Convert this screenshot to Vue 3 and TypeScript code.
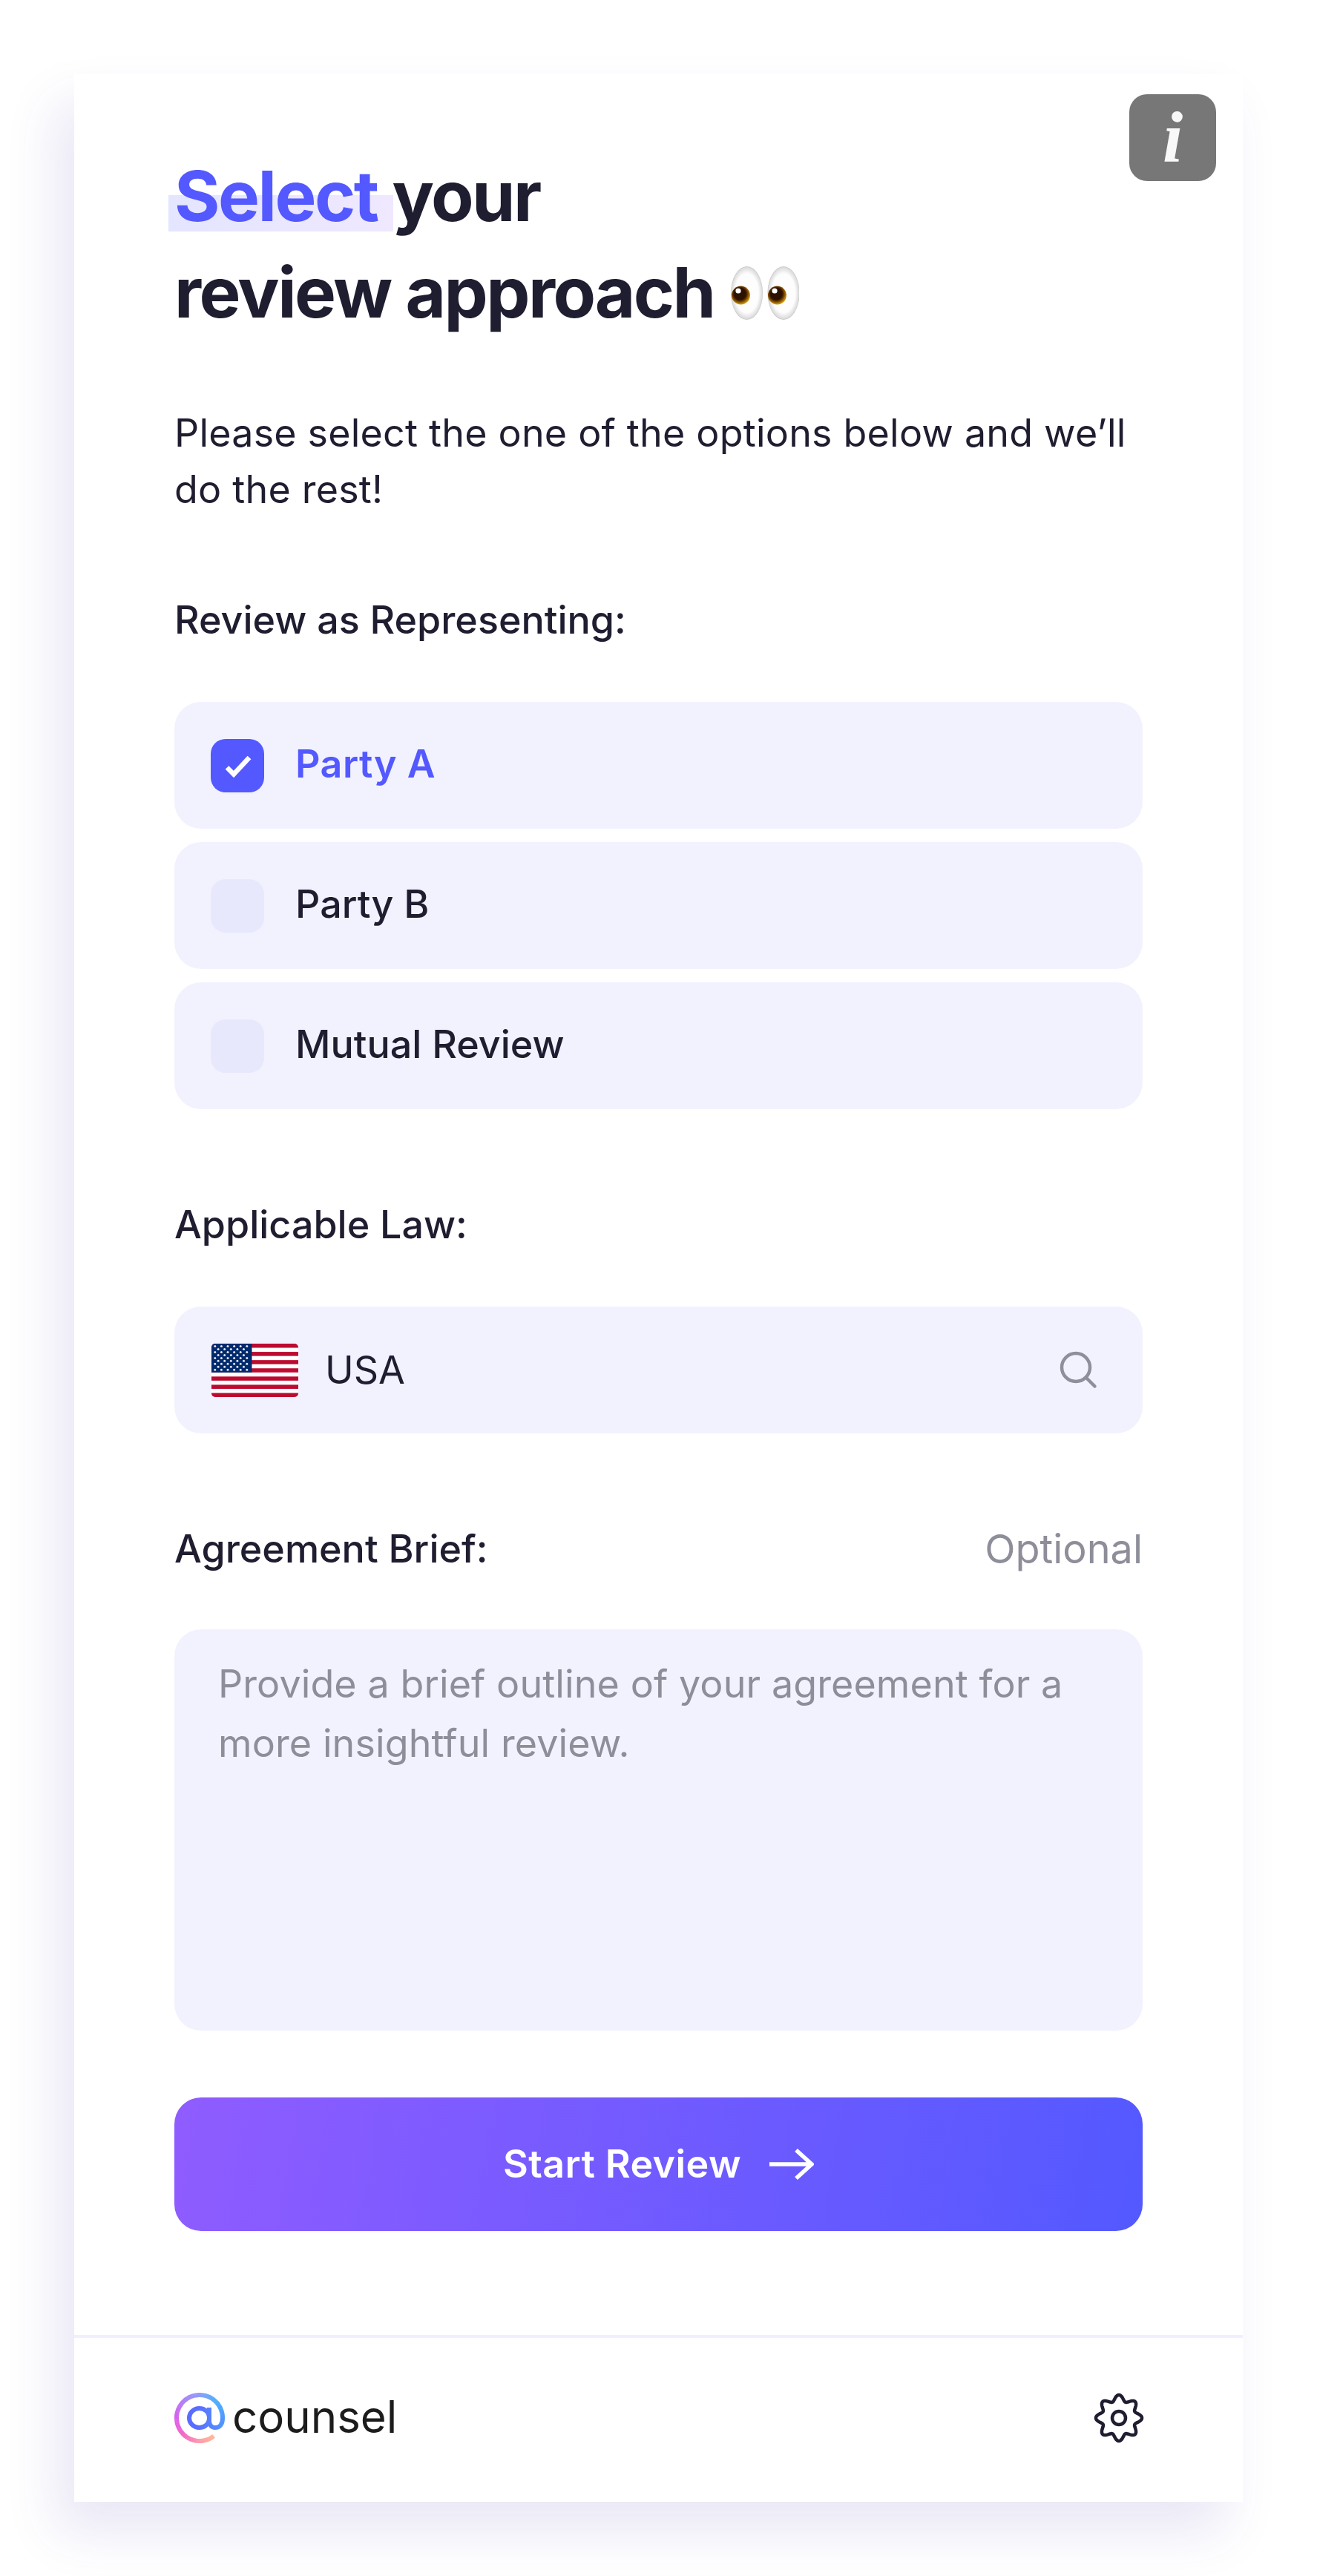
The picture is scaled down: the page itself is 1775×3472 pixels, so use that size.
<script setup lang="ts">
import { computed, ref } from 'vue'

const options = ['Party A', 'Party B', 'Mutual Review']
const selected = ref('Party A')

// Gear outline: eight smooth lobes round a common centre.
const gearPath = computed(() => {
  const points: string[] = []
  for (let i = 0; i < 320; i++) {
    const t = (i / 320) * Math.PI * 2
    const r = 27 + 4 * Math.cos(8 * t)
    points.push(`${(36 + r * Math.sin(t)).toFixed(2)} ${(36 - r * Math.cos(t)).toFixed(2)}`)
  }
  return `M${points.join('L')}Z`
})

// Flag stars: nine rows alternating six and five.
const stars = computed(() => {
  const list: { x: number; y: number }[] = []
  for (let row = 0; row < 9; row++) {
    const count = row % 2 === 0 ? 6 : 5
    for (let c = 0; c < count; c++) {
      list.push({
        x: (row % 2 === 0 ? 4.8 : 9.1) + c * 8.6,
        y: 3.6 + row * 3.95,
      })
    }
  }
  return list
})
const stripes = [0, 2, 4, 6, 8, 10, 12]

// Logo ring: colour shifts along the arc, clockwise from the tail end.
const mix = (a: number[], b: number[], k: number) =>
  `rgb(${a.map((v, i) => Math.round(v + (b[i] - v) * k)).join(',')})`
const stops: [number, number[]][] = [
  [0, [255, 184, 150]],
  [0.12, [255, 154, 170]],
  [0.27, [240, 104, 200]],
  [0.42, [216, 96, 240]],
  [0.56, [176, 128, 245]],
  [0.71, [138, 160, 248]],
  [0.85, [76, 176, 251]],
  [1, [82, 150, 255]],
]
const ring = computed(() => {
  const out: { d: string; c: string }[] = []
  const startDeg = 52
  const sweep = 308
  const n = 80
  const pt = (deg: number) => {
    const a = (deg * Math.PI) / 180
    return `${(34 + 31 * Math.cos(a)).toFixed(2)} ${(36 + 31 * Math.sin(a)).toFixed(2)}`
  }
  for (let i = 0; i < n; i++) {
    const k = i / n
    const a0 = startDeg + k * sweep
    const a1 = a0 + (sweep / n) * 1.2
    let c = ''
    for (let s = 0; s < stops.length - 1; s++) {
      if (k >= stops[s][0] && k <= stops[s + 1][0]) {
        c = mix(stops[s][1], stops[s + 1][1], (k - stops[s][0]) / (stops[s + 1][0] - stops[s][0]))
      }
    }
    out.push({ d: `M${pt(a0)}A31 31 0 0 1 ${pt(a1)}`, c })
  }
  return out
})
</script>

<template>
  <main class="page">
    <section class="card">
      <button class="info" type="button" aria-label="Information">i</button>

      <div class="content">
        <h1 class="title">
          <span class="mark">Select</span> your<br />review approach<svg class="eyes" viewBox="0 0 92 72" aria-hidden="true">
            <defs>
              <radialGradient id="white" cx="50%" cy="50%" r="52%">
                <stop offset="70%" stop-color="#fdfdfd" />
                <stop offset="92%" stop-color="#dcdcdc" />
                <stop offset="100%" stop-color="#a8a8a8" />
              </radialGradient>
              <radialGradient id="iris" cx="45%" cy="42%" r="55%">
                <stop offset="58%" stop-color="#2e1200" />
                <stop offset="78%" stop-color="#7a4500" />
                <stop offset="100%" stop-color="#c99400" />
              </radialGradient>
            </defs>
            <ellipse cx="21.5" cy="36" rx="21.5" ry="36" fill="url(#white)" />
            <ellipse cx="71" cy="36" rx="21.5" ry="36" fill="url(#white)" />
            <circle cx="13.5" cy="39" r="12.5" fill="url(#iris)" />
            <circle cx="62.5" cy="39" r="12.5" fill="url(#iris)" />
            <circle cx="10" cy="33" r="3.6" fill="#fff" />
            <circle cx="59" cy="33" r="3.6" fill="#fff" />
          </svg>
        </h1>

        <p class="intro">Please select the one of the options below and we’ll do the rest!</p>

        <h2 class="label first">Review as Representing:</h2>
        <div class="options">
          <div
            v-for="option in options"
            :key="option"
            class="option"
            :class="{ active: option === selected }"
            @click="selected = option"
          >
            <span class="box">
              <svg v-if="option === selected" viewBox="0 0 72 72" aria-hidden="true">
                <path d="M22 38.5 L31 47.5 L52 25" fill="none" stroke="#fff" stroke-width="6.5" />
              </svg>
            </span>
            <span class="option-text">{{ option }}</span>
          </div>
        </div>

        <h2 class="label law">Applicable Law:</h2>
        <div class="select">
          <svg class="flag" viewBox="0 0 117 72" aria-hidden="true">
            <rect width="117" height="72" fill="#fff" />
            <rect v-for="s in stripes" :key="s" x="0" :y="s * 5.54" width="117" height="5.54" fill="#bd0a30" />
            <rect width="54.5" height="38.8" fill="#012a6d" />
            <circle v-for="(star, i) in stars" :key="i" :cx="star.x" :cy="star.y" r="1.5" fill="#e6e8f2" />
          </svg>
          <span class="country">USA</span>
          <svg class="search" viewBox="0 0 56 56" aria-hidden="true">
            <circle cx="24" cy="24" r="19" fill="none" stroke="#8f8f9c" stroke-width="4.5" />
            <path d="M38 38 L49.5 49.5" fill="none" stroke="#8f8f9c" stroke-width="4.5" stroke-linecap="round" />
          </svg>
        </div>

        <div class="brief-head">
          <h2 class="label">Agreement Brief:</h2>
          <span class="optional">Optional</span>
        </div>
        <div class="brief">Provide a brief outline of your agreement for a more insightful review.</div>

        <button class="start" type="button">
          <span>Start Review</span>
          <svg viewBox="0 0 60 42" aria-hidden="true">
            <path d="M0 21 H57 M36 2 L57 21 L36 40" fill="none" stroke="#fff" stroke-width="5.5" />
          </svg>
        </button>
      </div>

      <footer class="footer">
        <div class="brand">
          <svg class="at" viewBox="0 0 68 72" aria-hidden="true">
            <defs>
              <linearGradient id="bowl" x1="0" y1="0" x2="1" y2="0">
                <stop offset="0.25" stop-color="#5a6cff" />
                <stop offset="1" stop-color="#5295ff" />
              </linearGradient>
            </defs>
            <path v-for="(seg, i) in ring" :key="i" :d="seg.d" fill="none" :stroke="seg.c" stroke-width="6" />
            <path
              d="M65 36 C65 45 61 49 55 49 C50 49 47 45 47 41 V22 M47 36 C47 44 41 49 33.5 49 C26 49 20 43 20 36 C20 29 26 23 33.5 23 C41 23 47 28 47 36"
              fill="none"
              stroke="url(#bowl)"
              stroke-width="6"
            />
          </svg>
          <span class="wordmark">counsel</span>
        </div>
        <svg class="gear" viewBox="0 0 72 72" aria-hidden="true">
          <path :d="gearPath" fill="none" stroke="#1f1d30" stroke-width="4.5" />
          <circle cx="36" cy="36" r="9" fill="none" stroke="#1f1d30" stroke-width="4.5" />
        </svg>
      </footer>
    </section>
  </main>
</template>

<style scoped>
.page {
  box-sizing: border-box;
  width: 1775px;
  height: 3472px;
  padding: 100px;
  overflow: hidden;
  background: #fff;
  font-family: Inter, "Liberation Sans", sans-serif;
  color: #1f1d30;
}
.card {
  position: relative;
  display: flex;
  flex-direction: column;
  width: 1575px;
  height: 3272px;
  background: #fff;
  box-shadow: -24px 40px 66px rgba(70, 60, 170, 0.12);
}
.info {
  position: absolute;
  top: 27px;
  right: 36px;
  width: 117px;
  height: 117px;
  padding: 0;
  border: 0;
  border-radius: 24px;
  background: #777;
  color: #f8f8f8;
  font: italic 700 98px/117px "Liberation Serif", serif;
}
.content {
  flex: 1;
  display: flex;
  flex-direction: column;
  padding: 99px 135px 0;
}
.title {
  margin: 0;
  font-size: 94px;
  line-height: 130px;
  font-weight: 700;
  letter-spacing: -2.5px;
}
.mark {
  position: relative;
  z-index: 0;
  color: #5359ff;
}
.mark::before {
  content: "";
  position: absolute;
  z-index: -1;
  left: -8px;
  right: -21px;
  bottom: 9px;
  height: 49px;
  background: linear-gradient(90deg, #e4e5ff, #efe8ff);
}
.eyes {
  display: inline-block;
  width: 92px;
  height: 72px;
  margin-left: 22px;
  vertical-align: -3px;
}
.intro {
  margin: 87px 0 0;
  font-size: 52px;
  line-height: 76px;
  font-weight: 400;
  letter-spacing: 0.2px;
}
.label {
  margin: 0;
  font-size: 52px;
  line-height: 60px;
  font-weight: 500;
}
.label.first {
  margin-top: 108px;
  margin-bottom: 80px;
}
.label.law {
  margin-top: 126px;
  margin-bottom: 80px;
}
.options {
  display: flex;
  flex-direction: column;
  gap: 18px;
}
.option {
  display: flex;
  align-items: center;
  gap: 43px;
  height: 171px;
  padding: 0 49px;
  border-radius: 36px;
  background: #f2f2ff;
  font-size: 52px;
  font-weight: 500;
  cursor: pointer;
}
.option-text {
  margin-left: -1px;
  padding-bottom: 5px;
}
.option.active {
  color: #5359ff;
  font-weight: 600;
  letter-spacing: 0.5px;
}
.box {
  flex: none;
  width: 72px;
  height: 72px;
  border-radius: 20px;
  background: #e8e8fd;
}
.box svg {
  display: block;
  width: 72px;
  height: 72px;
}
.active .box {
  background: #5359ff;
}
.select {
  display: flex;
  align-items: center;
  height: 171px;
  padding: 0 58px 0 50px;
  border-radius: 36px;
  background: #f2f2ff;
}
.flag {
  flex: none;
  width: 117px;
  height: 72px;
  border-radius: 5px;
}
.country {
  margin-left: 36px;
  font-size: 52px;
  font-weight: 400;
}
.search {
  flex: none;
  width: 56px;
  height: 56px;
  margin-left: auto;
}
.brief-head {
  display: flex;
  align-items: center;
  justify-content: space-between;
  margin-top: 126px;
}
.optional {
  font-size: 54px;
  line-height: 60px;
  color: #8e8e9a;
}
.brief {
  box-sizing: border-box;
  height: 541px;
  margin-top: 78px;
  padding: 34px 59px;
  border-radius: 36px;
  background: #f2f2ff;
  font-size: 52px;
  line-height: 80px;
  letter-spacing: 0.1px;
  color: #8e8e9a;
}
.start {
  display: flex;
  align-items: center;
  justify-content: center;
  gap: 38px;
  height: 180px;
  margin-top: 90px;
  padding: 0;
  border: 0;
  border-radius: 36px;
  background: linear-gradient(100deg, #8f5cff, #5359ff);
  color: #fff;
  font: 600 52px/1 Inter, "Liberation Sans", sans-serif;
  letter-spacing: 0.4px;
}
.start svg {
  width: 60px;
  height: 42px;
}
.footer {
  flex: none;
  box-sizing: border-box;
  display: flex;
  align-items: center;
  justify-content: space-between;
  height: 225px;
  padding: 0 131px 5px 135px;
  border-top: 4px solid #f0efff;
}
.brand {
  display: flex;
  align-items: center;
  gap: 10px;
}
.at {
  width: 68px;
  height: 72px;
}
.wordmark {
  margin-top: -4px;
  font-size: 60px;
  line-height: 72px;
  font-weight: 400;
  color: #1c1c1c;
}
.gear {
  width: 72px;
  height: 72px;
}
</style>
